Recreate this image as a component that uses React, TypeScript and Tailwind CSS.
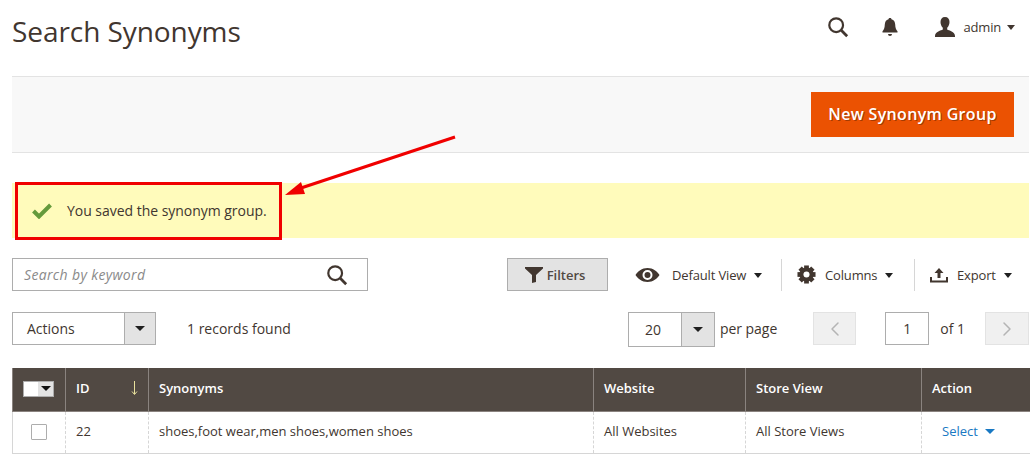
import { ChevronLeft, ChevronRight } from "lucide-react";

function Caret({ className = "border-t-[#202020]" }: { className?: string }) {
  return (
    <span
      className={`inline-block h-0 w-0 border-x-[5px] border-t-[5px] border-x-transparent ${className}`}
    />
  );
}

function SearchIcon({ size = 24 }: { size?: number }) {
  return (
    <svg width={size} height={size} viewBox="0 0 24 24" fill="none" stroke="#41362f">
      <circle cx="10" cy="10" r="7.500" strokeWidth="2.400" />
      <path d="M15.500 15.500L22 22" strokeWidth="3" />
    </svg>
  );
}

function GearIcon() {
  return (
    <svg className="mr-[9px]" width="19" height="19" viewBox="0 0 20 20" fill="#41362f">
      {[0, 45, 90, 135].map((deg) => (
        <rect key={deg} x="7.500" y="0.500" width="5" height="19" transform={`rotate(${deg} 10 10)`} />
      ))}
      <circle cx="10" cy="10" r="7.500" />
      <circle cx="10" cy="10" r="3.200" fill="#fff" />
    </svg>
  );
}

function ToolbarMenu({
  icon,
  label,
  divider,
  className,
}: {
  icon: React.ReactNode;
  label: string;
  divider?: boolean;
  className?: string;
}) {
  return (
    <div
      className={`flex h-8 items-center ${divider ? "border-l border-[#d6d6d6]" : ""} ${className ?? ""}`}
    >
      {icon}
      <span className="pt-[2px] text-[13px] tracking-[-0.15px] text-[#41362f]">{label}</span>
      <span className="mt-[2px] ml-[8px] inline-block h-0 w-0 border-x-[4.500px] border-t-[5px] border-x-transparent border-t-[#202020]" />
    </div>
  );
}

export default function App() {
  return (
    <div className="relative h-[459px] w-[1036px] overflow-hidden bg-white pl-3 pr-[7px] font-['Open_Sans',sans-serif] text-[#303030]">
      <header className="flex h-[76px] items-start justify-between">
        <h1 className="mt-[12px] text-[28px] leading-[38px] font-normal tracking-[-0.07px] whitespace-nowrap text-[#41362f]">
          Search Synonyms
        </h1>
        <div className="mt-[16px] flex items-center pr-[14px]">
          <SearchIcon size={22} />
          <svg className="ml-[32px]" width="18" height="20" viewBox="0 0 18 20" fill="#41362f">
            <path d="M9 1c.9 0 1.400.5 1.500 1.300 2.400.6 3.600 2.600 3.700 5.200.1 3.400.8 5 2.300 6.800v1.200H1.500v-1.200c1.500-1.800 2.200-3.400 2.300-6.800.1-2.600 1.300-4.600 3.700-5.200C7.600 1.500 8.100 1 9 1z" />
            <path d="M7 17h4a2 2 0 0 1-4 0z" />
          </svg>
          <svg className="ml-[36px]" width="20" height="20" viewBox="0 0 20 20" fill="#41362f">
            <path d="M10 0c3 0 4.500 2 4.500 5 0 2.500-1 4.500-2.300 5.800v1.700c1.500 1 7.800 2 7.800 6.500v1H0v-1c0-4.500 6.300-5.500 7.800-6.500v-1.700C6.500 9.500 5.500 7.500 5.500 5 5.500 2 7 0 10 0z" />
          </svg>
          <span className="ml-[9px] pt-[2px] text-[13px] tracking-[-0.2px] text-[#41362f]">admin</span>
          <span className="mt-[1px] ml-[6px] inline-block h-0 w-0 border-x-[4.500px] border-t-[5px] border-x-transparent border-t-[#41362f]" />
        </div>
      </header>

      <div className="flex h-[77px] items-center justify-end border-y border-[#e3e3e3] bg-[#f8f8f8] pr-[15px]">
        <button className="h-[45px] w-[203px] bg-[#eb5202] pb-[2px] text-[16px] font-semibold tracking-[0.33px] whitespace-nowrap text-white [text-shadow:1px_1px_0_#a33a02]">
          New Synonym Group
        </button>
      </div>

      <div className="mt-[30px] flex h-[55px] items-center bg-[#fffbbb] pl-[20px]">
        <svg width="20" height="16" viewBox="0 0 20 16" fill="none" stroke="#659a3c" strokeWidth="4">
          <path d="M1.500 8l5.500 5.500L18.500 2" />
        </svg>
        <span className="ml-[15px] text-[14px] tracking-[-0.03px] whitespace-nowrap text-[#41362f]">
          You saved the synonym group.
        </span>
      </div>

      <div className="mt-[20px] flex h-[33px] items-center">
        <div className="flex h-full w-[356px] items-center justify-between border border-[#adadad] pr-[19px] pl-[11px]">
          <span className="text-[14px] tracking-[0.35px] whitespace-nowrap text-[#8a8a8a] italic">Search by keyword</span>
          <SearchIcon size={22} />
        </div>
        <button className="ml-[139px] flex h-full w-[101px] items-center justify-center border border-[#adadad] bg-[#e3e3e3] pr-[5px] text-[13px] font-semibold text-[#514943]">
          <svg className="mr-[4px]" width="18" height="17" viewBox="0 0 18 17" fill="#41362f">
            <path d="M0 1h18v1.500L11 9v7l-4 1V9L0 2.500z" />
          </svg>
          <span className="pt-[2px]">Filters</span>
        </button>
        <ToolbarMenu
          className="ml-[27px] w-[146px]"
          label="Default View"
          icon={
            <svg className="mr-[12px]" width="25" height="16" viewBox="0 0 25 16" fill="#41362f">
              <path
                fillRule="evenodd"
                d="M12.500 1C18 1 22.500 4.500 24.500 8c-2 3.500-6.500 7-12 7S2.500 11.500.5 8c2-3.500 6.500-7 12-7zm0 2a5 5 0 1 0 0 10 5 5 0 0 0 0-10z"
              />
              <circle cx="12.500" cy="8" r="3" />
            </svg>
          }
        />
        <ToolbarMenu divider className="w-[133px] pl-[15px]" label="Columns" icon={<GearIcon />} />
        <ToolbarMenu
          divider
          className="pl-[15px]"
          label="Export"
          icon={
            <svg className="mr-[9px]" width="18" height="16" viewBox="0 0 18 16" fill="#41362f">
              <path d="M9 1l4.500 5H10.500v5h-3V6H4.500z" />
              <path d="M0 10h2v3.500h14V10h2v5.500H0z" />
            </svg>
          }
        />
      </div>

      <div className="mt-[21px] flex h-[33px] items-center">
        <div className="flex h-full w-[144px] shrink-0 border border-[#adadad]">
          <span className="flex-1 pl-[14px] text-[14px] leading-[31px] text-[#41362f]">Actions</span>
          <span className="flex w-[31px] items-center justify-center border-l border-[#adadad] bg-[#e3e3e3]">
            <Caret />
          </span>
        </div>
        <span className="ml-[31px] w-[103px] shrink-0 text-[14px] whitespace-nowrap text-[#41362f]">1 records found</span>

        <div className="mt-[2px] ml-[338px] flex h-[35px] w-[87px] shrink-0 border border-[#adadad]">
          <span className="w-[52px] pr-[4px] text-center text-[14px] leading-[33px] text-[#41362f]">20</span>
          <span className="flex flex-1 items-center justify-center border-l border-[#adadad] bg-[#e3e3e3]">
            <Caret />
          </span>
        </div>
        <span className="ml-[5px] shrink-0 text-[14px] tracking-[-0.05px] whitespace-nowrap text-[#41362f]">per page</span>
        <button className="ml-[36px] flex h-[33px] w-[43px] shrink-0 items-center justify-center border border-[#e3e3e3] bg-[#f0f0f0] text-[#b4b4b4]">
          <ChevronLeft size={24} strokeWidth={1.500} />
        </button>
        <span className="ml-[29px] h-[33px] w-[44px] shrink-0 border border-[#adadad] text-center text-[14px] leading-[31px] text-[#41362f]">
          1
        </span>
        <span className="ml-[11px] shrink-0 text-[14px] whitespace-nowrap text-[#41362f]">of 1</span>
        <button className="ml-[20px] flex h-[33px] w-[44px] shrink-0 items-center justify-center border border-[#e3e3e3] bg-[#f0f0f0] text-[#b4b4b4]">
          <ChevronRight size={24} strokeWidth={1.500} />
        </button>
      </div>

      <table className="mt-[23px] w-[1017px] table-fixed border-collapse text-[13px]">
        <colgroup>
          <col className="w-[53px]" />
          <col className="w-[83px]" />
          <col className="w-[445px]" />
          <col className="w-[152px]" />
          <col className="w-[176px]" />
          <col className="w-[108px]" />
        </colgroup>
        <thead>
          <tr className="h-[43px] border-b border-[#8a837f] bg-[#514943] text-left font-semibold text-white">
            <th className="border-x border-[#8a837f]">
              <div className="mt-[-1px] ml-[10px] flex h-[16px] w-[31px] border border-[#adadad]">
                <span className="w-[14px] bg-white" />
                <span className="flex flex-1 items-center justify-center bg-[#e3e3e3]">
                  <Caret className="border-t-[#111111]" />
                </span>
              </div>
            </th>
            <th className="border-r border-[#8a837f] pb-[2px] pl-[10px] font-semibold">
              <div className="flex items-center justify-between pr-[10px]">
                ID
                <svg width="7" height="14" viewBox="0 0 7 14" fill="none" stroke="#e8e09c">
                  <path d="M3.500 0v13M1 10.500l2.500 3 2.500-3" />
                </svg>
              </div>
            </th>
            <th className="border-r border-[#8a837f] pb-[2px] pl-[10px] font-semibold">Synonyms</th>
            <th className="border-r border-[#8a837f] pb-[2px] pl-[10px] font-semibold">Website</th>
            <th className="border-r border-[#8a837f] pb-[2px] pl-[10px] font-semibold">Store View</th>
            <th className="pb-[2px] pl-[10px] font-semibold">Action</th>
          </tr>
        </thead>
        <tbody>
          <tr className="h-[42px] border-b border-[#d6d6d6] text-[#41362f]">
            <td className="border-r border-l border-r-[#d6d6d6] border-l-[#d6d6d6] [border-right-style:dashed]">
              <span className="ml-[18px] block h-4 w-4 rounded-[1px] border border-[#adadad]" />
            </td>
            <td className="border-r border-dashed border-r-[#d6d6d6] pl-[10px]">22</td>
            <td className="border-r border-dashed border-r-[#d6d6d6] pl-[10px]">shoes,foot wear,men shoes,women shoes</td>
            <td className="border-r border-dashed border-r-[#d6d6d6] pl-[10px]">All Websites</td>
            <td className="border-r border-dashed border-r-[#d6d6d6] pl-[10px]">All Store Views</td>
            <td className="pl-[20px] text-[#1979c3]">
              Select
              <Caret className="mb-[2px] ml-[7px] border-t-[#1979c3]" />
            </td>
          </tr>
        </tbody>
      </table>

      {/* annotation added on top of the screenshot */}
      <div className="absolute top-[182px] left-[15px] h-[58px] w-[267px] border-[3px] border-[#f00000]" />
      <svg className="absolute top-[134px] left-[284px]" width="174" height="64" viewBox="0 0 174 64" fill="none">
        <path d="M171 3L14 55" stroke="#f00000" strokeWidth="3" />
        <path d="M1 61L17 48l4 12z" fill="#f00000" />
      </svg>
    </div>
  );
}
